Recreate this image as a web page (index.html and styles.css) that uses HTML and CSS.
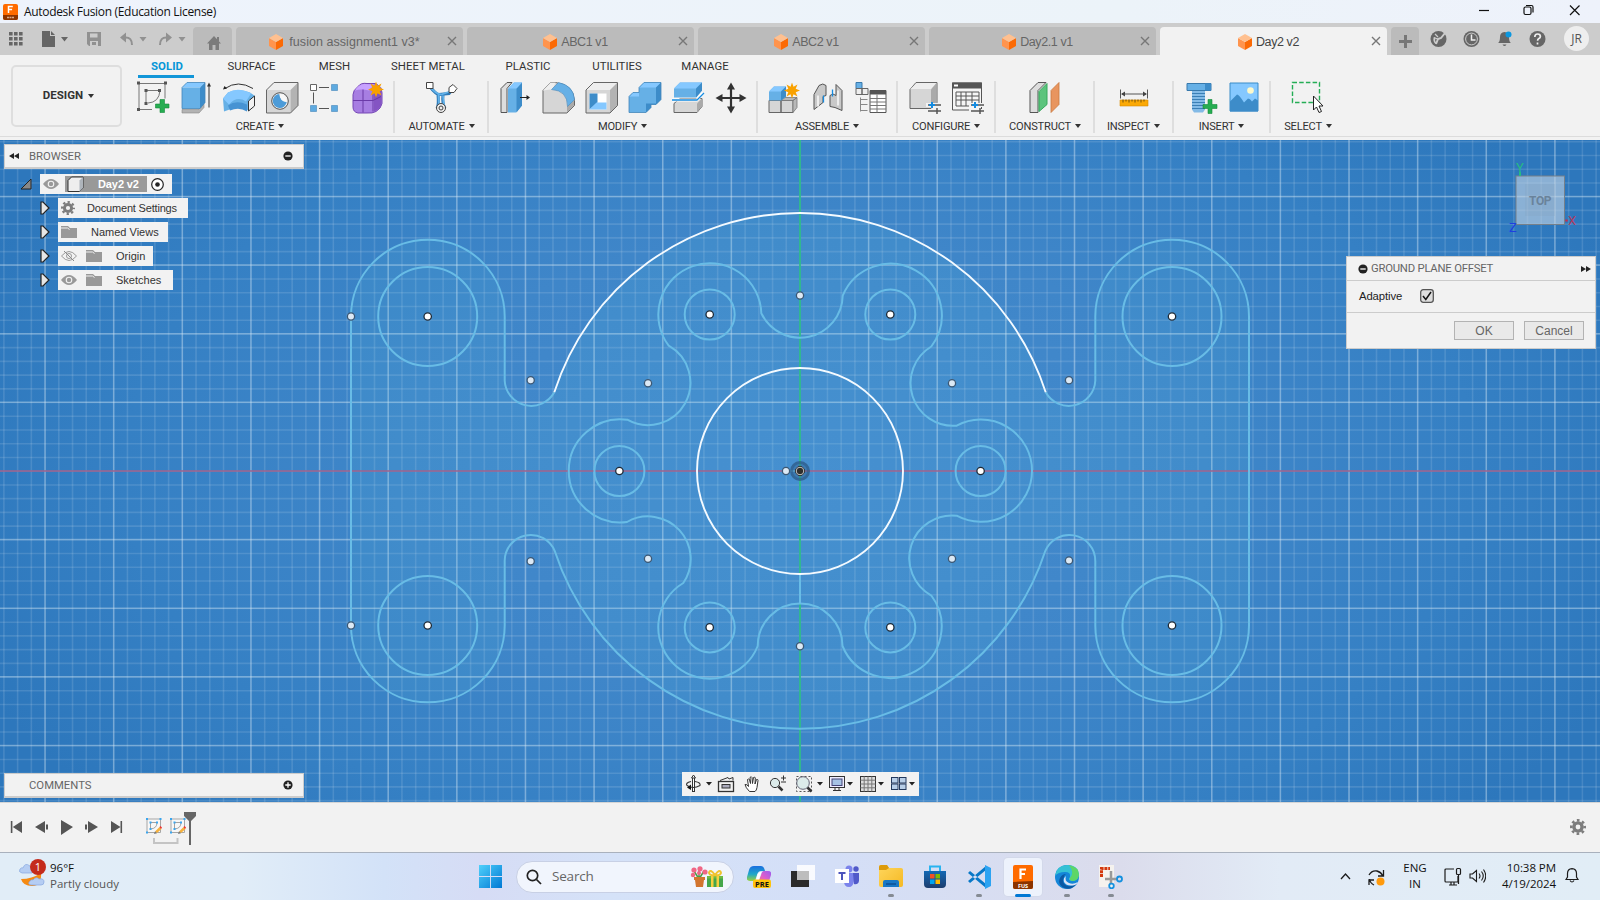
FILE: index.html
```html
<!DOCTYPE html>
<html lang="en">
<head>
<meta charset="utf-8">
<title>Autodesk Fusion (Education License)</title>
<link rel="stylesheet" href="styles.css">
</head>
<body>
<svg class="defs" width="0" height="0">
  <defs>
    <linearGradient id="gWin" x1="0" y1="0" x2="1" y2="1"><stop offset="0" stop-color="#4fd0fb"/><stop offset="1" stop-color="#0078d4"/></linearGradient>
    <linearGradient id="gVar" x1="0" y1="0" x2="1" y2="1"><stop offset="0" stop-color="#ffd75e"/><stop offset="1" stop-color="#f5b924"/></linearGradient>
    <linearGradient id="gCop" x1="0" y1="0" x2="0" y2="1"><stop offset="0" stop-color="#1a6fe0"/><stop offset=".55" stop-color="#21a8c8"/><stop offset="1" stop-color="#9bd33c"/></linearGradient>
    <linearGradient id="gCop2" x1="1" y1="0" x2="0" y2="1"><stop offset="0" stop-color="#9a5cf0"/><stop offset=".5" stop-color="#e05fc9"/><stop offset="1" stop-color="#ff8a50"/></linearGradient>
    <linearGradient id="gStore" x1="0" y1="0" x2="0" y2="1"><stop offset="0" stop-color="#1368b4"/><stop offset="1" stop-color="#1c3d6e"/></linearGradient>
    <symbol id="cube" viewBox="0 0 14 16"><path d="M0 4 7 8v8L0 12z" fill="#ff944d"/><path d="M14 4 7 8v8l7-4z" fill="#fb6a05"/><path d="M7 0l7 4-7 4-7-4z" fill="#ffc090"/></symbol>
    <symbol id="x" viewBox="0 0 10 10"><path d="M1 1l8 8M9 1L1 9" stroke="#777" stroke-width="1.400" fill="none"/></symbol>
    <symbol id="eye" viewBox="0 0 16 10"><path d="M0 5q8-10 16 0q-8 10-16 0z" fill="#999"/><circle cx="8" cy="5" r="3.300" fill="#f2f2f2"/><circle cx="8" cy="5" r="2.200" fill="#999"/></symbol>
    <symbol id="folder" viewBox="0 0 16 14"><path d="M0 1h7l2 2h7v10H0z" fill="#999"/><path d="M0 3h6.500l2 1.500" stroke="#f2f2f2" stroke-width="1" fill="none"/></symbol>
    <symbol id="tri" viewBox="0 0 10 14"><path d="M1 1h2l6 6-6 6H1z" fill="#e6e6e6" stroke="#222" stroke-width="1.200"/></symbol>
    <symbol id="gear" viewBox="0 0 16 16"><circle cx="8" cy="8" r="4.100" fill="none" stroke="#7d7d7d" stroke-width="3.400"/><circle cx="8" cy="8" r="6.700" fill="none" stroke="#7d7d7d" stroke-width="2.600" stroke-dasharray="2.630 2.630" stroke-dashoffset="1.300"/></symbol>
    <symbol id="star" viewBox="0 0 16 16"><path d="M8 0l1.500 4.200L13.500 2l-1.800 4.200L16 8l-4.300 1.800L13.500 14l-4-2.200L8 16l-1.500-4.200L2.500 14l1.800-4.200L0 8l4.300-1.800L2.500 2l4 2.200z" fill="#f9a100"/></symbol>
    <symbol id="sk" viewBox="0 0 16 16"><path d="M1 1h13.500v13.500H1z" fill="#f7f7f7" stroke="#a6a6a6"/><path d="M4.500 11V4.500H11q0 6-6.500 6.500z" fill="none" stroke="#999" stroke-width=".9"/><g fill="#3aa5ee"><path d="M0 0h2v2H0zM13.500 0h2v2h-2zM0 13.500h2v2H0zM3.500 3.500h2v2h-2zM10 3.500h2v2h-2zM3.500 10h2v2h-2z"/></g><path d="M9 13.500l4.500-4.500 2 2-4.500 4z" fill="#f6b13c"/><path d="M8 16l1-2.700 2 2z" fill="#777"/><path d="M13.500 9l1-1 1.500 1.500-1 1.500z" fill="#e33"/></symbol>
  </defs>
</svg>

<header class="titlebar">
  <svg class="app" width="15" height="16"><rect width="15" height="16" rx="2" fill="#ff6b00"/><path d="M0 11h15v3a2 2 0 0 1-2 2H2a2 2 0 0 1-2-2z" fill="#8c3400"/><path d="M5.500 9V2.500h4.300M5.500 5.600h3.600" stroke="#fff" stroke-width="1.500" fill="none"/><path d="M4 13.500h7" stroke="#d8a98a" stroke-width="1.500" stroke-dasharray="2 .5"/></svg>
  <span class="title">Autodesk Fusion (Education License)</span>
  <svg class="wincontrols" width="116" height="23" fill="none" stroke="#111" stroke-width="1.200"><path d="M5 10.500h10"/><rect x="50" y="7" width="7" height="7.500" rx="1.500"/><path d="M52 5.500h5.500q1.500 0 1.500 1.500v5.500"/><path d="M96 5.500l9.500 9.500M105.500 5.500l-9.500 9.500"/></svg>
</header>

<nav class="tabbar">
  <svg class="quick" width="193" height="32">
    <g fill="#666"><path d="M9 9h3.600v3.600H9zM14 9h3.600v3.600H14zM19 9h3.600v3.600H19zM9 14h3.600v3.600H9zM14 14h3.600v3.600H14zM19 14h3.600v3.600H19zM9 19h3.600v3.600H9zM14 19h3.600v3.600H14zM19 19h3.600v3.600H19z"/><path d="M42 8h8v5h5v11H42z"/><path d="M51 8l4 4h-4zM61 14h7l-3.500 4.500z"/></g>
    <g fill="#919191"><path d="M87 9h14v14H89l-2-2z"/><path d="M90 10.500h7.500v4H90z" fill="#ccc"/><path d="M90 18h8v5h-8z" fill="#ccc"/><path d="M92 19h4v3h-4z"/><path d="M120 14.500l6-5v10zM139.500 14h7l-3.500 4.500zM172 14.500l-6-5v10zM178.500 14h7l-3.500 4.500z"/></g>
    <path d="M125 14.500q7-.5 7 7.500M167 14.500q-7-.5-7 7.500" stroke="#919191" stroke-width="2" fill="none"/>
  </svg>
  <div class="home"><svg width="14" height="14"><path d="M7 0l7 7.500h-2V14H8.500V9h-3v5H2V7.500H0zM10 1h2v4h-2z" fill="#7b7b7b"/></svg></div>
  <div class="tab"><svg class="cube"><use href="#cube"/></svg><span class="wide">fusion assignment1 v3*</span><svg class="close"><use href="#x"/></svg></div>
  <div class="tab"><svg class="cube"><use href="#cube"/></svg><span>ABC1 v1</span><svg class="close"><use href="#x"/></svg></div>
  <div class="tab"><svg class="cube"><use href="#cube"/></svg><span>ABC2 v1</span><svg class="close"><use href="#x"/></svg></div>
  <div class="tab"><svg class="cube"><use href="#cube"/></svg><span>Day2.1 v1</span><svg class="close"><use href="#x"/></svg></div>
  <div class="tab active"><svg class="cube"><use href="#cube"/></svg><span>Day2 v2</span><svg class="close"><use href="#x"/></svg></div>
  <div class="plus"><svg width="13" height="13"><path d="M6.500 0v13M0 6.500h13" stroke="#777" stroke-width="3"/></svg></div>
  <svg class="status" width="133" height="32">
    <circle cx="19.500" cy="16" r="8" fill="#666"/><path d="M17 20.500q-2.500-2.500-1.500-6" fill="none" stroke="#ccc" stroke-width="1.700"/><path d="M17 21l2-5 3-1 4-5" fill="none" stroke="#ccc" stroke-width="2"/><path d="M15 14.500l3.500 1.500M16 11l3 3" stroke="#ccc" stroke-width="1.300"/>
    <circle cx="52.500" cy="16" r="8" fill="#666"/><circle cx="52.500" cy="16" r="5.900" fill="none" stroke="#ccc" stroke-width="1"/><path d="M52.500 11.500V17h4" fill="none" stroke="#eee" stroke-width="1.500"/>
    <path d="M79 20q2-1 2-6 0-4.500 4.500-5 4.500.5 4.500 5 0 5 2 6zM83.500 21.500h4q-2 3-4 0z" fill="#666"/><circle cx="89.500" cy="11.500" r="3" fill="#0a97e0"/>
    <circle cx="118.500" cy="16" r="8" fill="#666"/><path d="M115.800 14q0-3 2.800-3 2.800 0 2.800 2.500 0 1.500-1.800 2.300-1 .5-1 2M118.500 19.500v2" stroke="#eee" stroke-width="1.700" fill="none"/>
  </svg>
  <div class="avatar">JR</div>
</nav>

<section class="ribbon">
  <div class="design">DESIGN<i class="dn"></i></div>
  <div class="ribbonmain">
    <div class="modes"><b class="m1">SOLID</b><span class="m2">SURFACE</span><span class="m3">MESH</span><span class="m4">SHEET METAL</span><span class="m5">PLASTIC</span><span class="m6">UTILITIES</span><span class="m7">MANAGE</span></div>
    <div class="groups">
      <div class="group g1"><div class="icons">
        <svg viewBox="0 0 32 32"><path d="M2 2h26M2 2v26M2 28h13M28 2v15M9 9v13M9 9h14q-1 12-12 12.500" fill="none" stroke="#777"/><g fill="#555"><path d="M0 0h3v3H0zM27 0h3v3h-3zM0 26.500h3v3H0zM7.500 7.500h3v3h-3zM21 7.500h3v3h-3zM7.500 20.500h3v3h-3z"/></g><path d="M23 18h4.500v4.500H32v4h-4.500V31H23v-4.500h-4.500v-4H23z" fill="#26ad51" stroke="#14893a" stroke-width=".6"/></svg>
        <svg viewBox="1 0 32 32"><path d="M3 28h17l5-6v4l-5 5.500H3z" fill="#b3b3b3" stroke="#888" stroke-width=".6"/><path d="M3 6L8 1h18l-5 5z" fill="#85c8ff"/><path d="M3 6h18v21H3z" fill="#66b0e6"/><path d="M21 6l5-5v20l-5 6z" fill="#3d8cc9"/><path d="M3 6L8 1h18v20l-5 6H3z" fill="none" stroke="#4487ba" stroke-width=".8"/><path d="M30 4v22" stroke="#333"/><path d="M28 5l2-4 2 4z" fill="#333"/></svg>
        <svg viewBox="0 0 32 32"><path d="M2 7q13-9 28 0" fill="none" stroke="#333"/><path d="M0 8l1.500-3.500L4 7z" fill="#222"/><path d="M0 17L5 11q10-5 22 0l5 3.500v9l-6 6-5-3q-7-3-13 1L1 30z" fill="#66b0e6"/><path d="M0 17l5-6q10-6 23 1l-5 8q-9-6-17 3z" fill="#85c8ff"/><path d="M5 24q8-6 19-1v7q-8-5-17-1" fill="#4693d3"/><path d="M25.500 19.500l6-5v10l-6 5z" fill="#f2f2f2" stroke="#333"/></svg>
        <svg viewBox="0 0 32 32"><path d="M.5 8.500L8 1h24v23l-7.500 7.500H.5z" fill="#eee"/><path d="M.5 8.500h24v23H.5z" fill="#d6d6d6"/><path d="M24.500 8.500L32 1v23l-7.500 7.500z" fill="#b3b3b3"/><path d="M.5 8.500L8 1h24v23l-7.500 7.500H.5z" fill="none" stroke="#666"/><circle cx="14" cy="19.500" r="8.300" fill="#eee" stroke="#555"/><path d="M13.500 12.500a7 7 0 1 0 7.200 8q-7-1-7.200-8z" fill="#4c9bd8"/><path d="M13.500 12.500q.2 7 7.200 8 0-8-7.200-8z" fill="#f8f8f8"/></svg>
        <svg viewBox="0 0 32 32"><path d="M4.500 11v11M10 6h10M10 27h10" fill="none" stroke="#555"/><path d="M1.500 3h6v6h-6z" fill="#fff" stroke="#666"/><g fill="#5eaae0" stroke="#4487ba" stroke-width=".6"><path d="M22.500 3h6v6h-6zM1.500 24h6v6h-6zM22.500 24h6v6h-6z"/></g></svg>
        <svg viewBox="0 0 32 32"><path d="M1 13q0-4 5-8 3-4 9-3h8q6 2 7 9v11q-1 5-6 8-3 2-10 1.500H6q-5-1-5-6z" fill="#a77ee2" stroke="#7547b5"/><path d="M3 9q4-7 10-6.500l9 .5-5 6q-8-2-14 0z" fill="#c8a2ff"/><path d="M22 10q6-2 7.500-4v17q-2 5-7.500 7z" fill="#8454c3"/><path d="M1 19h20l8-4M11 8v23M21 11v19" fill="none" stroke="#6b3aa8"/><use href="#star" x="16" y="0" width="16" height="16"/></svg>
      </div><div class="label">CREATE<i class="dn"></i></div></div>
      <div class="group g2"><div class="icons">
        <svg viewBox="0 0 32 32"><path d="M4 4q7 9 10 9l10-1 5-6M13 13q1 10-1 14M18 13q-1 9 2 14" stroke="#2f79b6" stroke-width="3" fill="none"/><path d="M4 4q7 9 12 9l9-3M13.500 13l.5 12M18 14l1 11" stroke="#61b2ea" stroke-width="1.800" fill="none"/><circle cx="16" cy="26.500" r="4.500" fill="#eee" stroke="#444"/><circle cx="16" cy="26.500" r="2" fill="none" stroke="#444"/><path d="M1.500 1H8v6H1.500zM24 6l4-3 4 4-3 4h-5z" fill="#fff" stroke="#444"/></svg>
      </div><div class="label">AUTOMATE<i class="dn"></i></div></div>
      <div class="group g3"><div class="icons">
        <svg viewBox="0 0 32 32"><path d="M2 7l6-6h5L8 7v24H2z" fill="#ddd" stroke="#555"/><path d="M9 7l6-6h8v23l-6 7H9z" fill="#66b0e6"/><path d="M17.500 7L23 1v23l-5.500 7z" fill="#3d8cc9"/><path d="M9 7l6-6h8l-5.500 6z" fill="#85c8ff"/><path d="M21 16h8" stroke="#222"/><path d="M27.500 13.500l3.500 2.500-3.500 2.500z" fill="#222"/></svg>
        <svg viewBox="-.5 0 32 32"><path d="M.5 9L8 1h5q18 2 19 18v5l-7.500 7.500H.5z" fill="#d6d6d6" stroke="#666"/><path d="M24.500 25l7-6v5l-7 7z" fill="#aaa"/><path d="M.5 9L8 1h5L10 8q-4 0-9 1z" fill="#eee"/><path d="M9 8l7-7q15 3 16 17l-7 7Q25 9 9 8z" fill="#66b0e6" stroke="#4487ba" stroke-width=".6"/></svg>
        <svg viewBox="-.5 0 32 32"><path d="M.5 8.500L8 1h24v23l-7.500 7.500H.5z" fill="#eee"/><path d="M.5 8.500h24v23H.5z" fill="#d6d6d6"/><path d="M24.500 8.500L32 1v23l-7.500 7.500z" fill="#b3b3b3"/><path d="M.5 8.500L8 1h24v23l-7.500 7.500H.5z" fill="none" stroke="#666"/><path d="M4 12h17v16H4z" fill="#fff"/><path d="M4 12h8v9L4 28z" fill="#3d8cc9"/><path d="M4 28l7-7h10v7z" fill="#85c8ff"/></svg>
        <svg viewBox="-1 0 32 32"><path d="M10 6l5-5h17v17l-5 5h-5v3l-5 5H0V15l4-4h6z" fill="#66b0e6"/><path d="M10 6l5-5h17l-5 5zM0 15l4-4h6v4z" fill="#85c8ff"/><path d="M27 6l5-5v17l-5 5h-5v3l-5 5v-9h10z" fill="#3d8cc9"/><path d="M10 6l5-5h17v17l-5 5h-5v3l-5 5H0V15l4-4h6z" fill="none" stroke="#4487ba" stroke-width=".8"/></svg>
        <svg viewBox="-1 0 32 32"><path d="M2 22l6-5h22v8l-5 6H2z" fill="#d6d6d6" stroke="#666"/><path d="M25 22l5-5v8l-5 6z" fill="#aaa"/><path d="M2 7l6-6h22v8l-6 7H2z" fill="#66b0e6"/><path d="M2 7l6-6h22l-6 6z" fill="#85c8ff"/><path d="M24 7l6-6v8l-6 7z" fill="#3d8cc9"/><path d="M0 18.500h25l6-7" stroke="#fff" stroke-width="3" fill="none"/><path d="M0 18.500h25l7-7" stroke="#158be0" stroke-width="1.300" fill="none"/></svg>
        <svg viewBox="-1 0 32 32"><path d="M16 4v24M4 16.500h24" stroke="#333" stroke-width="2.200"/><path d="M16 1l4 7h-8zM16 32l4-7h-8zM.5 16.500l7-4v8zM31.500 16.500l-7-4v8z" fill="#333"/></svg>
      </div><div class="label">MODIFY<i class="dn"></i></div></div>
      <div class="group g4"><div class="icons">
        <svg viewBox="0 0 32 32"><path d="M1 19h12v12H1zM13 19h12v12H13z" fill="#d6d6d6" stroke="#666"/><path d="M13 19l4-3h12l-4 3zM25 19l4-3v10l-4 5z" fill="#b8b8b8" stroke="#777" stroke-width=".8"/><path d="M1 10l5-5h12v10l-5 4H1z" fill="#66b0e6"/><path d="M1 10l5-5h12l-5 5z" fill="#85c8ff"/><path d="M13 10l5-5v10l-5 4z" fill="#3d8cc9"/><use href="#star" x="16" y="1" width="16" height="16"/></svg>
        <svg viewBox="-1 0 32 32"><g fill="#c9c9c9" stroke="#555"><path d="M2 13l5-9q4-3 7 0v10l-3 1v6l-9 7z"/><path d="M30 29l-7-3-5-1V14q3-3 6 0V3l6 6z"/></g><path d="M6 14v11M26 9v15" stroke="#eee" stroke-width="2"/><path d="M11.500 14v7M20.500 8v7" stroke="#158be0" stroke-width="1.300"/></svg>
        <svg viewBox="-1 0 32 32"><path d="M1 1h6v6H1z" fill="#66b0e6" stroke="#3879ac"/><path d="M1 7h6v6H1zM7 7h6v6H7z" fill="#eee" stroke="#666"/><path d="M5.500 16v14M5.500 18h7M5.500 23h7M5.500 29h7" stroke="#888" fill="none"/><path d="M15 9h16v22H15z" fill="#fff" stroke="#555"/><path d="M15 9h16v4H15z" fill="#555"/><path d="M15 17h16M15 20.500h16M15 24h16M15 27.500h16M22 13v18" stroke="#777"/></svg>
      </div><div class="label">ASSEMBLE<i class="dn"></i></div></div>
      <div class="group g5"><div class="icons">
        <svg viewBox="0 0 32 32"><path d="M1 8l6-7h21v20l-6 6H1z" fill="#d6d6d6" stroke="#666"/><path d="M1.500 7.500l6-6h20l-5.500 6z" fill="#eee"/><path d="M22 8l5.500-6.500v19L22 26.500z" fill="#aaa"/><path d="M17 23.500h16M17 29.500h16" stroke="#f2f2f2" stroke-width="4"/><path d="M19 23.500h13M19 29.500h13M28 26.500v6" stroke="#555" stroke-width="1.500"/><path d="M20 23.500h6M23 20.500v6" stroke="#158be0" stroke-width="2"/></svg>
        <svg viewBox="0 0 32 32"><path d="M.5 1.500h29v27H.5z" fill="#f5f5f5" stroke="#555"/><path d="M0 1h30v6H0z" fill="#555"/><path d="M2 3h4v2H2z" fill="#fff"/><path d="M4 10.500h23v14H4zM4 14.500h23M4 18.500h23M9 10.500v14M14 10.500v14M20 10.500v14" fill="none" stroke="#555"/><path d="M17 23.500h16M17 29.500h16" stroke="#f2f2f2" stroke-width="4"/><path d="M19 23.500h13M19 29.500h13M28 26.500v6" stroke="#555" stroke-width="1.500"/><path d="M20 23.500h6M23 20.500v6" stroke="#158be0" stroke-width="2"/></svg>
      </div><div class="label">CONFIGURE<i class="dn"></i></div></div>
      <div class="group g6"><div class="icons">
        <svg viewBox="0 0 32 32"><path d="M1 9l8-8h8L9 9v22H1z" fill="#ddd" stroke="#555"/><path d="M10 10l8-8v21l-8 7z" fill="#5cc47d" stroke="#36a85c"/><path d="M22 9l8-8v22l-8 8z" fill="#e8955f" stroke="#c9793f" stroke-width=".8"/></svg>
      </div><div class="label">CONSTRUCT<i class="dn"></i></div></div>
      <div class="group g7"><div class="icons">
        <svg viewBox="0 0 32 32"><path d="M2.500 8v9M29.500 8v9M4 12.500h24" stroke="#555"/><path d="M3 12.500l4-2.500v5zM29 12.500l-4-2.500v5z" fill="#444"/><path d="M2 18.500h28v6H2z" fill="#fba905" stroke="#d68b00" stroke-width=".6"/><path d="M5 18v3M8 18v2M11 18v3M14 18v2M17 18v3M20 18v2M23 18v3M26 18v2" stroke="#73500c"/></svg>
      </div><div class="label">INSPECT<i class="dn"></i></div></div>
      <div class="group g8"><div class="icons">
        <svg viewBox="-1 0 32 32"><path d="M7 9h13v19l-2 3H9l-2-3z" fill="#83bae6"/><path d="M7 12h13M7 15h13M7 18h13M7 21h13M7 24h13M7 27h13" stroke="#3b7fb5"/><path d="M2 2h24v7H2z" fill="#66b0e6" stroke="#3879ac"/><path d="M20 2h6v7h-6z" fill="#3d8cc9"/><path d="M23 18h4v5h5v4h-5v5h-4v-5h-5v-4h5z" fill="#26ad51" stroke="#14893a" stroke-width=".6"/></svg>
        <svg viewBox="-1 0 32 32"><path d="M2 1.500h28v28H2z" fill="#85c8ff" stroke="#3b8cc8"/><path d="M2 20l7-7q2 0 7 8l4-4q2 0 4 3l3-3 3 2v11H2z" fill="#3d8cc9"/><circle cx="22.500" cy="9" r="3.300" fill="#fdf9cc"/></svg>
      </div><div class="label">INSERT<i class="dn"></i></div></div>
      <div class="group g9"><div class="icons">
        <svg viewBox="0 0 32 32"><path d="M.5 1h27v20h-27z" fill="none" stroke="#24ad55" stroke-width="1.400" stroke-dasharray="4.500 2.200"/><path d="M21.500 14.500v14l3-3 2.500 5.500 2.500-1-2.500-5.500h4z" fill="#fff" stroke="#222"/></svg>
      </div><div class="label">SELECT<i class="dn"></i></div></div>
    </div>
  </div>
</section>

<main class="canvas">
  <svg class="drawing" viewBox="0 140 1600 662" width="1600" height="662" fill="none">
    <path d="M0 471H1600" stroke="#fff" stroke-opacity=".12" stroke-width="662" stroke-dasharray="1.600 12.126" stroke-dashoffset="-3.100"/>
    <path d="M800 -7.700V802" stroke="#fff" stroke-opacity=".12" stroke-width="1600" stroke-dasharray="1.600 12.126" stroke-dashoffset="-11.420"/>
    <path d="M0 471H1600" stroke="#d8ebf5" stroke-opacity=".33" stroke-width="662" stroke-dasharray="1.500 67.130" stroke-dashoffset="-44.300"/>
    <path d="M800 -10.200V802" stroke="#d8ebf5" stroke-opacity=".35" stroke-width="1600" stroke-dasharray="1.500 67.130"/>
    <path d="M351 316.500A76.800 76.800 0 0 1 504.700 316.500V380.500A26.500 26.500 0 0 0 554.300 392.300A258 258 0 0 1 1045.700 392.300A26.500 26.500 0 0 0 1095.300 380.500V316.500A76.800 76.800 0 0 1 1249 316.500V625.500A76.800 76.800 0 0 1 1095.300 625.500V561A26 26 0 0 0 1045 551.700A258 258 0 0 1 555 551.700A26 26 0 0 0 504.700 561.500V625.500A76.800 76.800 0 0 1 351 625.500z" fill="#55c0e0" fill-opacity=".1"/>
    <path d="M0 471H1600" stroke="#96507f" stroke-opacity=".9" stroke-width="1.700"/>
    <path d="M800 140V802" stroke="#26ba83" stroke-width="1.700"/>
    <g stroke="#68bce6" stroke-width="2">
      <path d="M1045.700 392.300A26.500 26.500 0 0 0 1095.300 380.500V316.500A76.800 76.800 0 0 1 1249 316.500V625.500A76.800 76.800 0 0 1 1095.300 625.500V561A26 26 0 0 0 1045 551.700A258 258 0 0 1 555 551.700A26 26 0 0 0 504.700 561.500V625.500A76.800 76.800 0 0 1 351 625.500V316.500A76.800 76.800 0 0 1 504.700 316.500V380.500A26.500 26.500 0 0 0 554.300 392.300"/>
      <path d="M761.300 313.300A51.500 51.500 0 1 0 668.700 345.700A42.300 42.300 0 0 1 627.300 419.700A51.600 51.600 0 1 0 627 522A42.600 42.600 0 0 1 683.300 583A51.500 51.500 0 1 0 757.700 646A42.400 42.400 0 0 1 842.500 646A51.500 51.500 0 1 0 931.300 595.500A42.700 42.700 0 0 1 956.700 515.700A51.100 51.100 0 1 0 956.700 425.700A42.700 42.700 0 0 1 931.300 346.500A51.500 51.500 0 1 0 842.700 295.700A42.800 42.800 0 0 1 761.300 313.300z"/>
      <circle cx="427.700" cy="316.500" r="49.500"/><circle cx="427.700" cy="625.500" r="49.500"/><circle cx="1172" cy="316.500" r="49.500"/><circle cx="1172" cy="625.500" r="49.500"/>
      <circle cx="709.700" cy="314.500" r="25"/><circle cx="890.300" cy="314.500" r="25"/><circle cx="619.400" cy="471" r="25"/><circle cx="980.600" cy="471" r="25"/><circle cx="709.700" cy="627.400" r="25"/><circle cx="890.300" cy="627.400" r="25"/>
      <path d="M800 574v30M351 316.500v309M786 471h14"/>
    </g>
    <g stroke="#f4faff" stroke-width="1.900"><path d="M554.300 392.300A258 258 0 0 1 1045.700 392.300"/><circle cx="800" cy="471" r="103"/></g>
    <g fill="#dce9f5" stroke="#3c5874" stroke-width="1.300">
      <circle cx="351" cy="316.500" r="3.600"/><circle cx="351" cy="625.500" r="3.600"/><circle cx="530.700" cy="380.300" r="3.600"/><circle cx="1069" cy="380.300" r="3.600"/><circle cx="530.700" cy="561.300" r="3.600"/><circle cx="1069" cy="560.500" r="3.600"/><circle cx="648" cy="383.200" r="3.600"/><circle cx="952" cy="383.200" r="3.600"/><circle cx="648" cy="558.700" r="3.600"/><circle cx="952" cy="558.700" r="3.600"/><circle cx="800" cy="295.500" r="3.600"/><circle cx="800" cy="646.300" r="3.600"/><circle cx="786" cy="471" r="3.600"/>
    </g>
    <g fill="#fff" stroke="#1c2a38" stroke-width="1.300">
      <circle cx="427.700" cy="316.500" r="3.700"/><circle cx="427.700" cy="625.500" r="3.700"/><circle cx="1172" cy="316.500" r="3.700"/><circle cx="1172" cy="625.500" r="3.700"/><circle cx="709.700" cy="314.500" r="3.700"/><circle cx="890.300" cy="314.500" r="3.700"/><circle cx="619.400" cy="471" r="3.700"/><circle cx="980.600" cy="471" r="3.700"/><circle cx="709.700" cy="627.400" r="3.700"/><circle cx="890.300" cy="627.400" r="3.700"/>
    </g>
    <circle cx="800" cy="471" r="8.500" stroke="#2d5a86" stroke-opacity=".75" stroke-width="3"/><circle cx="800" cy="471" r="6" stroke="#2d5a86" stroke-opacity=".4" stroke-width="2"/><circle cx="800" cy="471" r="4.500" fill="#2e2e2e" stroke="#222" stroke-width="1"/><circle cx="800" cy="471" r="3.800" stroke="#c4c4c4" stroke-width="1"/>
    <g class="viewcube"><rect x="1516" y="176" width="48.500" height="48.500" fill="#c3d3e3" fill-opacity=".62" stroke="#76808a"/><rect x="1525" y="184" width="30" height="32" fill="#7f9db9" fill-opacity=".18"/><text x="1540" y="204.500" text-anchor="middle" class="face">TOP</text><path d="M1520 172v4" stroke="#26ba83" stroke-width="2"/><circle cx="1566.500" cy="220.500" r="1.300" fill="#c03050"/><text x="1516" y="172" class="axis" fill="#26ba83">Y</text><text x="1568" y="225" class="axis" fill="#b13c62">X</text><text x="1509" y="232" class="axis" fill="#1f3fe0">Z</text></g>
  </svg>

  <aside class="browser">
    <div class="panelhead"><svg width="10" height="6"><path d="M5 0v6L0 3zM10 0v6L5 3z" fill="#222"/></svg><span>BROWSER</span><svg class="toggle" width="10" height="10"><circle cx="5" cy="5" r="4.600" fill="#222"/><path d="M2.300 5h5.400" stroke="#fff" stroke-width="1.300"/></svg></div>
    <div class="row root"><svg class="open" width="12" height="12"><path d="M11 1v10H1z" fill="#888" stroke="#222"/></svg><div class="item"><svg class="eye"><use href="#eye"/></svg><div class="sel"><svg width="17" height="16"><path d="M1 4.500L4.500 1H16v11l-3.500 3.500H1z" fill="#eee" stroke="#333"/><path d="M12.500 4.500L16 1v11l-3.500 3.500z" fill="#aeb4bb"/></svg><b>Day2 v2</b></div><svg class="radio" width="13" height="13"><circle cx="6.500" cy="6.500" r="5.800" fill="#fff" stroke="#222" stroke-width="1.200"/><circle cx="6.500" cy="6.500" r="2.300" fill="#222"/></svg></div></div>
    <div class="row"><svg class="tri"><use href="#tri"/></svg><div class="item w1"><svg class="gear"><use href="#gear"/></svg><span>Document Settings</span></div></div>
    <div class="row"><svg class="tri"><use href="#tri"/></svg><div class="item w2"><svg class="folder"><use href="#folder"/></svg><span>Named Views</span></div></div>
    <div class="row"><svg class="tri"><use href="#tri"/></svg><div class="item w3"><svg class="eye" viewBox="0 0 16 10"><path d="M.5 5q7.500-9 15 0-7.500 9-15 0z" fill="none" stroke="#999"/><circle cx="8" cy="5" r="2.500" fill="none" stroke="#999"/><path d="M3 0l10 10" stroke="#888"/></svg><svg class="folder"><use href="#folder"/></svg><span>Origin</span></div></div>
    <div class="row"><svg class="tri"><use href="#tri"/></svg><div class="item w4"><svg class="eye"><use href="#eye"/></svg><svg class="folder"><use href="#folder"/></svg><span>Sketches</span></div></div>
  </aside>

  <aside class="dialog">
    <div class="dhead"><svg width="10" height="10"><circle cx="5" cy="5" r="4.600" fill="#222"/><path d="M2.300 5h5.400" stroke="#fff" stroke-width="1.300"/></svg><span>GROUND PLANE OFFSET</span><svg class="ff" width="10" height="6"><path d="M0 0v6l5-3zM5 0v6l5-3z" fill="#222"/></svg></div>
    <div class="dbody"><span>Adaptive</span><svg width="14" height="14"><rect x=".7" y=".7" width="12.600" height="12.600" rx="2.500" fill="#ddd" stroke="#555" stroke-width="1.300"/><path d="M3 7l2.800 3.500L11 3" fill="none" stroke="#111" stroke-width="1.500"/></svg></div>
    <div class="dfoot"><span class="btn">OK</span><span class="btn">Cancel</span></div>
  </aside>

  <div class="comments"><span>COMMENTS</span><svg width="10" height="10"><circle cx="5" cy="5" r="4.600" fill="#222"/><path d="M2.300 5h5.400M5 2.300v5.400" stroke="#fff" stroke-width="1.300"/></svg></div>

  <div class="navbar"><svg width="237" height="24" fill="none" stroke="#333">
    <path d="M11.500 4v16" stroke-width="3"/><path d="M11.500 5v14" stroke="#fff"/><path d="M9 9.500q-6 1.500-4 4 6 4 13 0 1-3-5-4" stroke-width="1.100"/><path d="M9 12.500l-4 3 4 2.500z" fill="#111" stroke="none"/><path d="M9.500 6l2-3 2 3z" fill="#fff"/>
    <rect x="36.500" y="9.500" width="15" height="10" stroke-width="1.300"/><rect x="40" y="12.500" width="8" height="3.500" fill="#aab"/><path d="M38 8.500l8-3 1 1.500 4-1.500v3"/>
    <path d="M67.500 19.500q-4-4-4.500-7 2-.5 3.500 2l-1-7q1.500-1 2 0l1 4-.5-6q1.500-1.500 2 0l.5 6 1-6q1.500-1 1.800.5l-.3 6 1.500-4.500q1.500-.5 1.500 1l-1 7q-.5 3-2 4z" fill="#fff"/>
    <circle cx="93" cy="11" r="4.600" fill="#dcebea"/><path d="M96.500 14.500l4 4" stroke-width="2.500"/><path d="M99 6h5M101.500 3.500v5M99 10h5"/>
    <path d="M114.500 4.500h15v15h-15z" stroke="#555" stroke-dasharray="2 2"/><circle cx="121" cy="11" r="6.300" fill="#dcebea" stroke="#667"/><path d="M125.500 15.500l4 4" stroke-width="2.500"/>
    <rect x="147.500" y="4.500" width="15" height="11" fill="#eef"/><rect x="150" y="7" width="10" height="6.500" fill="#a6c3e4" stroke="#447"/><path d="M151 18.500h8M153 16v2M157 16v2"/>
    <rect x="178.500" y="4.500" width="15" height="15" fill="#ddd"/><path d="M182.200 4.500v15M186 4.500v15M189.800 4.500v15M178.500 8.200h15M178.500 12h15M178.500 15.800h15" stroke="#777"/>
    <g fill="#b9cfe8" stroke="#24395c"><rect x="209.500" y="5.500" width="6.500" height="5.500"/><rect x="217.500" y="5.500" width="6.500" height="5.500"/><rect x="209.500" y="12" width="6.500" height="5.500"/><rect x="217.500" y="12" width="6.500" height="5.500"/></g>
    <path d="M24 10h6l-3 3.500zM135 10h6l-3 3.500zM165 10h6l-3 3.500zM196 10h6l-3 3.500zM227 10h6l-3 3.500z" fill="#222" stroke="none"/>
  </svg></div>
</main>

<section class="timeline">
  <svg class="player" width="124" height="20" fill="#555"><path d="M.8 4h1.600v12H.8zM12 4v12L2.800 10zM35 4v12l-10-6zM36 7.500h2v5h-2zM51 3l12 7-12 8zM75 7.500h2v5h-2zM78 4v12l10-6zM101 4v12l9.500-6zM110.500 4h1.600v12h-1.600z"/></svg>
  <div class="marks"><svg class="sk"><use href="#sk"/></svg><svg class="sk"><use href="#sk"/></svg><svg class="bracket" width="26" height="8"><path d="M1 0v5h23.500V0" fill="none" stroke="#c4c4c4" stroke-width="2"/></svg></div>
  <svg class="marker" width="12" height="33"><path d="M0 0h12v4L7 9v24H5V9L0 4z" fill="#666"/></svg>
  <svg class="gear big"><use href="#gear"/></svg>
</section>

<footer class="taskbar">
  <div class="weather"><svg width="30" height="30"><path d="M5 14q-4-1-2-4 2-2 3-1 2-6 7-2l2 4v3z" fill="#b5cdf3" stroke="#86a8e0" stroke-width=".7"/><path d="M4 20q11 0 20-6 1 13-9 13-9 0-11-7z" fill="#f58a12"/><path d="M14 26q-4-1-1-4 2-2 3-1 3-4 6-1 5-1 5 3 0 3-3 3z" fill="#b5cdf3" stroke="#86a8e0" stroke-width=".7"/><circle cx="21" cy="8" r="8" fill="#c42b1c"/><text x="21" y="12" text-anchor="middle" class="badge">1</text></svg><div><p>96°F</p><p class="dim">Partly cloudy</p></div></div>
  <svg class="start" width="23" height="23" viewBox="0 0 24 24" fill="url(#gWin)"><path d="M0 0h11.500v11.500H0zM12.500 0H24v11.500H12.500zM0 12.500h11.500V24H0zM12.500 12.500H24V24H12.500z"/></svg>
  <div class="search"><svg width="16" height="16" fill="none" stroke="#222" stroke-width="1.700"><circle cx="6.500" cy="6.500" r="5.200"/><path d="M10.500 10.500l4.500 4.500"/></svg><span>Search</span>
    <svg class="gift" width="34" height="22"><path d="M9 4v10M4 5l5 8M14 5l-5 8" stroke="#4b9b45" stroke-width="1.500"/><g fill="#f06685"><circle cx="4" cy="4" r="2.600"/><circle cx="10" cy="2.800" r="2.600"/><circle cx="15" cy="6" r="2.600"/><circle cx="3" cy="9" r="2.200"/><circle cx="9" cy="7" r="2"/></g><path d="M4 11h11v3h-1l-1 7H6l-1-7H4z" fill="#d2752f"/><path d="M17 10h16v11H17z" fill="#45a64b"/><path d="M17 10h16v2.500H17z" fill="#6dbb45"/><path d="M21 10h2.500v11H21zM26.500 10H29v11h-2.500z" fill="#f7cf3f"/><path d="M25 9q-5-7-6-2 1 3 6 2 5 1 6-2-1-5-6 2z" fill="none" stroke="#efc430" stroke-width="2"/></svg></div>
  <div class="apps">
    <div><svg viewBox="0 0 24 24"><path d="M7 1h7q3 0 4 5h-4q-3 0-4 4l-2 6H3q-4 0-3-4l2-7q1-4 5-4z" fill="url(#gCop)"/><path d="M17 6h4q4 0 3 4l-2 6q-1 4-4 4h-8l4-10q1-4 3-4z" fill="url(#gCop2)"/><path d="M14 7q-3 0-4 4l-1 4h3l2.500-8z" fill="#fff"/><rect x="6" y="14.500" width="18" height="8.500" rx="2" fill="#ffc40c"/><text x="15" y="21.500" text-anchor="middle" class="pre">PRE</text></svg></div>
    <div><svg viewBox="0 0 24 24"><path d="M0 6h18v16H0z" fill="#2b2b2b"/><path d="M6 0h18v15H6z" fill="#fff" fill-opacity=".85"/><path d="M6 6h12v9H6z" fill="#bdbdbd"/></svg></div>
    <div><svg viewBox="0 0 24 24"><circle cx="14" cy="4" r="3.500" fill="#7b83eb"/><circle cx="21" cy="4" r="2.700" fill="#5059c9"/><path d="M9 8h10v8q-1 6-5 6-5 0-5-6z" fill="#7b83eb"/><path d="M18 8h6v8q-1 4-5 3z" fill="#5059c9"/><path d="M0 4h14v14H0z" fill="#fff"/><path d="M3.500 8h7M7 8v7" stroke="#4b53bc" stroke-width="2"/></svg></div>
    <div class="run"><svg viewBox="0 0 24 24"><path d="M0 2q0-2 2-2h6l2 3h12q2 0 2 2v15q0 2-2 2H2q-2 0-2-2z" fill="url(#gVar)"/><path d="M0 2q0-2 2-2h6l2 3-3 2H0z" fill="#dd9b0b"/><path d="M4 22v-5q0-2 2-2h12q2 0 2 2v5z" fill="#1877c5"/><path d="M7 19h10" stroke="#0c4f94" stroke-width="1.500"/></svg></div>
    <div><svg viewBox="0 0 24 24"><path d="M7 7V1.500h10V7" fill="none" stroke="#29b3f0" stroke-width="2"/><path d="M1 6h22v13q0 4-4 4H5q-4 0-4-4z" fill="url(#gStore)"/><path d="M7 9h4.500v4.500H7z" fill="#f25022"/><path d="M12.500 9H17v4.500h-4.500z" fill="#7fba00"/><path d="M7 14.500h4.500V19H7z" fill="#00a4ef"/><path d="M12.500 14.500H17V19h-4.500z" fill="#ffb900"/></svg></div>
    <div class="run"><svg viewBox="0 0 24 24"><path d="M1 8l2-2 16 13v4zM1 16l2 2L19 5V1z" fill="#0878c8"/><path d="M18 0l6 3v18l-6 3z" fill="#2ca3f2"/></svg></div>
    <div class="run cur"><svg viewBox="0 0 24 24"><rect x="2" width="20" height="24" rx="2" fill="#ff6b00"/><path d="M2 17l20-1v6q0 2-2 2H4q-2 0-2-2z" fill="#8c3400"/><path d="M9.500 14V4.500h5.500M9.500 9h4.500" stroke="#fff" stroke-width="2.200" fill="none"/><text x="12" y="22.500" text-anchor="middle" class="fus">FUS</text></svg></div>
    <div class="run"><svg viewBox="0 0 24 24"><circle cx="12" cy="12" r="12" fill="#1486d8"/><path d="M0 11Q2 0 12 0q11 0 12 9 0 7-7 7-5-1-2-4 1-5-5-5-7 0-10 4z" fill="#35c1d5"/><path d="M14 0q10 2 10 10-1 6-7 6-3-1-2-3 5-5-1-13z" fill="#5ed667"/><path d="M9 12q-3 7 4 9 5 1 9-3-5 8-13 5-7-4-4-10 2-4 6-4-2 1-2 3z" fill="#0c59a4"/><path d="M11 11q-2 5 3 7 4 2 9-1-1 2-3 3-8 2-11-3-1-4 2-6z" fill="#dce4f6"/></svg></div>
    <div class="run"><svg viewBox="0 0 24 24"><path d="M0 0h15v22H0z" fill="#f5f2ee"/><path d="M2.500 12V3.500H11" fill="none" stroke="#d4380d" stroke-width="3" stroke-dasharray="3 .8"/><path d="M6 14h12M12 6v13" stroke="#999" stroke-width="2.500"/><circle cx="20.500" cy="14" r="2.500" fill="none" stroke="#1490df" stroke-width="1.800"/><circle cx="12.500" cy="21" r="2.300" fill="none" stroke="#1490df" stroke-width="1.800"/></svg></div>
  </div>
  <svg class="tray" width="52" height="24" fill="none" stroke="#1c1c1c" stroke-width="1.300"><path d="M1 14l4.500-5L10 14"/><path d="M29 10q3-5 8-4 4 1 6 5M43.500 5v6H38M34 20q-4-2-4.500-6M29 20v-5h5"/><circle cx="40.500" cy="16.500" r="4" fill="#ff9a0c" stroke="none"/></svg>
  <div class="lang"><p>ENG</p><p>IN</p></div>
  <svg class="net" width="42" height="24" fill="none" stroke="#1c1c1c" stroke-width="1.200"><path d="M10 5H2q-1 0-1 1v11q0 1 1 1h12v-6M5 21h8M7 18v3M10 18v3"/><rect x="12.500" y="4.500" width="4" height="6" rx="1"/><path d="M14.500 10.500V20"/><path d="M26 10h2.500l4-3.500v11l-4-3.500H26zM35 9.500q2 2.500 0 5M37.500 7.500q3.500 4.500 0 9M39.500 5.500q4.500 6.500 0 13" stroke-width="1.100"/></svg>
  <div class="clock"><p>10:38 PM</p><p>4/19/2024</p></div>
  <svg class="bell" width="14" height="16" fill="none" stroke="#1c1c1c" stroke-width="1.200"><path d="M1 11.500L2.500 9V5.500q0-4.500 4.500-4.800 4.500.3 4.500 4.800V9l1.500 2.500zM5 12.500q2 3 4 0"/></svg>
</footer>
</body>
</html>
```
FILE: styles.css
```css
* { box-sizing: border-box; }
body { margin: 0; width: 1600px; height: 900px; overflow: hidden; font-family: "Liberation Sans", Arial, sans-serif; color: #333; background: #f2f2f2; }
p { margin: 0; }
svg { display: block; flex: none; }
.defs { position: absolute; }

.titlebar { height: 23px; display: flex; align-items: center; background: linear-gradient(90deg, #eef3fc, #ecf3f9 70%, #eef2fb); font-family: "Open Sans", "Noto Sans", sans-serif; color: #111; }
.app { margin-left: 3px; }
.title { font-size: 12px; margin-left: 6px; letter-spacing: -.32px; line-height: 22px; }
.wincontrols { margin: 0 10px 0 auto; }

.tabbar { height: 32px; background: #ccc; display: flex; align-items: flex-end; }
.quick { width: 193px; align-self: center; }
.home { width: 39px; height: 28px; background: #bbb; border-radius: 4px 4px 0 0; display: grid; place-items: center; padding: 3px 0 0 3px; margin-right: 4px; }
.tab { width: 227px; height: 28px; background: #bbb; border-radius: 4px 4px 0 0; margin-right: 4px; display: flex; align-items: center; justify-content: center; position: relative; font-size: 12.500px; letter-spacing: -.4px; color: #666; padding-right: 11px; }
.tab .cube { width: 14px; height: 16px; margin: 2px 4px 0 1px; }
.tab span { padding-top: 1px; }
.tab .wide { padding-left: 2px; letter-spacing: .05px; }
.tab .close { width: 10px; height: 10px; position: absolute; right: 6px; top: 9px; }
.tab.active { background: #f2f2f2; color: #444; }
.plus { width: 28px; height: 28px; border-radius: 4px 4px 0 0; background: #bbb; display: grid; place-items: center; }
.status { width: 133px; }
.avatar { width: 25px; height: 25px; border-radius: 50%; background: #eee; margin: 0 0 4px 12px; text-align: center; font: 12px/25px "Open Sans", sans-serif; color: #555; }

.ribbon { height: 85px; display: flex; background: #f2f2f2; box-shadow: inset 0 -3px #f2f2f2, inset 0 -4px #dcdcdc; font-family: Roboto, sans-serif; font-size: 11.500px; }
.design { width: 111px; height: 62px; margin: 10px 6px 0 11px; border: 2px solid #dedede; border-radius: 5px; display: flex; align-items: center; justify-content: center; font-weight: 700; font-size: 11.500px; padding: 0 0 2px 4px; }
.dn { display: inline-block; border: 3px solid transparent; border-top: 4px solid #333; border-bottom: 0; margin-left: 4px; vertical-align: 2px; }
.design .dn { margin-left: 5px; margin-top: 1px; }
.modes { height: 23px; display: grid; grid-template-columns: 76px 93px 73px 114px 86px 92px 84px; line-height: 22px; text-align: center; margin-left: 1px; font-size: 11.400px; }
.modes b { color: #0696d7; position: relative; }
.modes b::after { content: ""; position: absolute; left: 9px; right: 11px; bottom: 0; height: 3px; background: #1296d8; }
.groups { display: flex; margin-top: 3px; }
.group { height: 52px; border-right: 2px solid #dedede; display: flex; flex-direction: column; align-items: center; }
.group:last-child { border: 0; padding-right: 4px; }
.g1 { width: 267px; } .g2 { width: 94px; } .g3 { width: 269px; } .g4 { width: 140px; } .g5 { width: 98px; } .g6 { width: 99px; } .g7 { width: 79px; } .g8 { width: 97px; } .g9 { width: 78px; }
.icons { display: flex; gap: 11px; }
.icons svg { width: 32px; height: 33px; overflow: visible; }
.label { margin-top: 5px; line-height: 15px; white-space: nowrap; font-size: 11.100px; letter-spacing: -.2px; }
.g1 .label { padding-right: 1px; }
.g2 .label, .g6 .label { padding-left: 1px; }

.canvas { height: 662px; position: relative; overflow: hidden; background: radial-gradient(ellipse 900px 520px at 50% 50%, #448bce 0, #3f86c9 45%, #3580c4 75%, #2d77bc 100%); }
.drawing { position: absolute; left: 0; top: 0; }
.face { font: 700 12px Roboto, sans-serif; fill: #6a839b; letter-spacing: -.5px; }
.axis { font: 13px Roboto, sans-serif; }

.browser { position: absolute; left: 4px; top: 4px; width: 300px; font-size: 11px; }
.panelhead, .comments { height: 25px; background: #f2f2f2; border: 1px solid #ccc; border-bottom-width: 2px; display: flex; align-items: center; font: 11.300px Roboto, sans-serif; color: #666; }
.panelhead { padding: 0 10px 0 4px; margin-bottom: 5px; }
.panelhead span { margin-left: 10px; }
.toggle { margin-left: auto; }
.row { display: flex; align-items: center; height: 20px; margin-bottom: 4px; padding-left: 35px; }
.root { padding-left: 16px; }
.open { margin-right: 8px; }
.tri { width: 10px; height: 14px; margin: 0 8.500px 0 .5px; }
.item { height: 20px; background: #f2f2f2; display: flex; align-items: center; padding-left: 3px; white-space: nowrap; }
.root .item { width: 132px; }
.eye { width: 16px; height: 10px; }
.sel { width: 82px; height: 16px; margin: 0 4px 0 6px; background: #999; color: #fff; display: flex; align-items: center; gap: 14px; padding-left: 2px; font-size: 11px; }
.sel b { letter-spacing: -.1px; }
.w1 { width: 130px; } .w2 { width: 110px; } .w3 { width: 95px; } .w4 { width: 115px; }
.gear { width: 14px; height: 14px; }
.folder { width: 16px; height: 14px; }
.w1 span { margin-left: 12px; letter-spacing: -.18px; } .w2 span, .w3 span, .w4 span { margin-left: 14px; }
.eye + .folder { margin-left: 9px; }

.dialog { position: absolute; left: 1346px; top: 116px; width: 250px; height: 93px; background: #f2f2f2; border: 1px solid #ccc; }
.dhead { height: 24px; border-bottom: 1px solid #ccc; display: flex; align-items: center; padding: 0 4px 0 11px; font: 11.300px Roboto, sans-serif; color: #666; }
.dhead span { margin-left: 3px; letter-spacing: -.22px; }
.ff { margin-left: auto; }
.dbody { height: 32px; border-bottom: 1px solid #ccc; display: flex; align-items: center; padding: 0 0 2px 12px; font-size: 11.300px; gap: 18px; color: #222; }
.dbody span { letter-spacing: -.1px; }
.dfoot { display: flex; justify-content: flex-end; gap: 10px; padding: 8px 11px 0 0; }
.btn { width: 60px; height: 19px; border: 1px solid #b3b3b3; background: #e9e9e9; text-align: center; font-size: 12px; line-height: 18px; color: #666; }

.comments { position: absolute; left: 4px; top: 633px; width: 300px; justify-content: space-between; padding: 0 10px 0 24px; }
.navbar { position: absolute; left: 682px; top: 632px; background: #f2f2f2; }

.timeline { height: 51px; background: #f2f2f2; border-top: 1px solid #d5d5d5; border-bottom: 1px solid #a9b1bd; display: flex; padding: 0 14px 0 10px; }
.player { margin-top: 14px; }
.marks { display: grid; grid-template-columns: 16px 16px; column-gap: 8px; margin: 15px 0 0 12px; align-content: start; width: 38px; }
.sk { width: 16px; height: 16px; }
.bracket { grid-column: 1 / 3; margin: 4px 0 0 7px; }
.marker { margin-top: 9px; }
.big { width: 16px; height: 16px; margin: 16px 0 0 auto; }

.taskbar { height: 47px; display: flex; align-items: center; background: linear-gradient(90deg, #e1edf7 0, #e1edf8 15%, #d3e2f8 24%, #d6dcf5 30%, #d5e2f8 38%, #d4dff7 52%, #dbdcec 70%, #e2ebf6 80%, #e1edf6 100%); font: 12px "Open Sans", "Noto Sans", sans-serif; color: #111; }
.weather { width: 479px; display: flex; gap: 3px; padding: 0 0 2px 17px; line-height: 16px; font-size: 11.500px; }
.weather svg { margin-top: -1px; }
.dim { color: #555; }
.badge { font: 11px "Open Sans", sans-serif; fill: #fff; }
.start { margin-right: 14px; }
.search { width: 218px; height: 32px; border-radius: 16px; background: #f1f5fd; border: 1px solid #c8d0e5; display: flex; align-items: center; padding: 0 9px 0 9px; color: #666; font-size: 13.500px; }
.search span { margin: -1px 0 0 10px; letter-spacing: -.2px; }
.gift { margin-left: auto; }
.apps { display: flex; margin-left: 6px; gap: 6px; }
.apps div { width: 38px; height: 38px; border-radius: 4px; display: grid; place-items: center; position: relative; }
.apps svg { width: 24px; height: 24px; }
.run::after { content: ""; position: absolute; bottom: -1px; left: 16px; width: 6px; height: 3px; border-radius: 2px; background: #858b93; }
.cur { background: #edf2fc; box-shadow: 0 0 0 1px #d3d9ea; }
.cur::after { left: 11px; width: 16px; background: #0078d4; }
.pre { font: bold 7.500px "Open Sans", sans-serif; fill: #111; }
.fus { font: bold 5.500px "Open Sans", sans-serif; fill: #fff; }
.tray { margin-left: 210px; }
.lang { width: 40px; text-align: center; line-height: 16px; margin-left: 3px; font-size: 11.500px; padding-bottom: 1px; }
.net { margin: 0 0 2px 9px; }
.clock { width: 70px; text-align: right; line-height: 16px; font-size: 11.500px; letter-spacing: -.05px; padding-bottom: 2px; }
.bell { margin: 0 0 2px 9px; }
```
